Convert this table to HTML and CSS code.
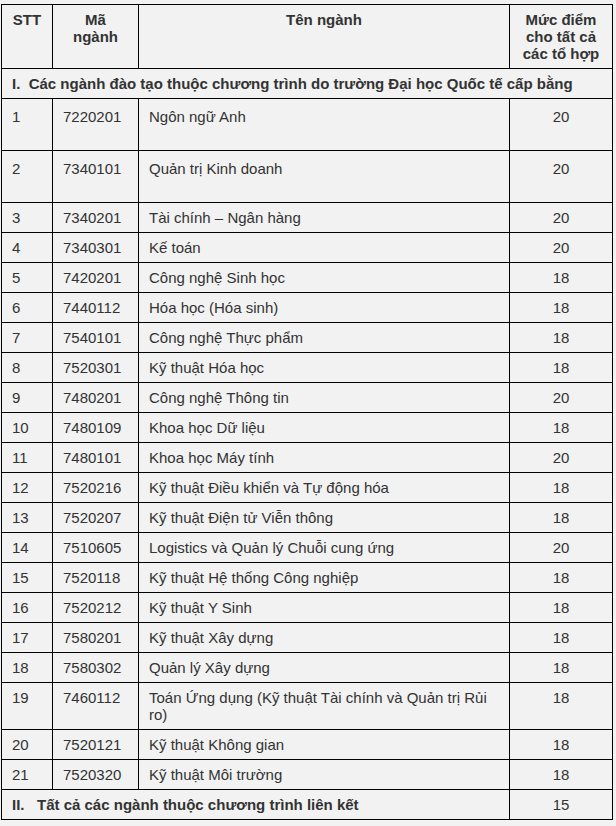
FILE: index.html
```html
<!DOCTYPE html>
<html lang="vi">
<head>
<meta charset="utf-8">
<title>Mức điểm</title>
<link rel="stylesheet" href="styles.css">
</head>
<body>
<table class="scores">
  <colgroup>
    <col class="c-stt">
    <col class="c-ma">
    <col class="c-ten">
    <col class="c-diem">
  </colgroup>
  <thead>
    <tr class="head">
      <th>STT</th>
      <th>Mã<br>ngành</th>
      <th>Tên ngành</th>
      <th>Mức điểm<br>cho tất cả<br>các tổ hợp</th>
    </tr>
  </thead>
  <tbody>
    <tr class="section"><td colspan="4">I.&nbsp; Các ngành đào tạo thuộc chương trình do trường Đại học Quốc tế cấp bằng</td></tr>
    <tr class="tall"><td>1</td><td>7220201</td><td>Ngôn ngữ Anh</td><td class="num">20</td></tr>
    <tr class="tall"><td>2</td><td>7340101</td><td>Quản trị Kinh doanh</td><td class="num">20</td></tr>
    <tr><td>3</td><td>7340201</td><td>Tài chính – Ngân hàng</td><td class="num">20</td></tr>
    <tr><td>4</td><td>7340301</td><td>Kế toán</td><td class="num">20</td></tr>
    <tr><td>5</td><td>7420201</td><td>Công nghệ Sinh học</td><td class="num">18</td></tr>
    <tr><td>6</td><td>7440112</td><td>Hóa học (Hóa sinh)</td><td class="num">18</td></tr>
    <tr><td>7</td><td>7540101</td><td>Công nghệ Thực phẩm</td><td class="num">18</td></tr>
    <tr><td>8</td><td>7520301</td><td>Kỹ thuật Hóa học</td><td class="num">18</td></tr>
    <tr><td>9</td><td>7480201</td><td>Công nghệ Thông tin</td><td class="num">20</td></tr>
    <tr><td>10</td><td>7480109</td><td>Khoa học Dữ liệu</td><td class="num">18</td></tr>
    <tr><td>11</td><td>7480101</td><td>Khoa học Máy tính</td><td class="num">20</td></tr>
    <tr><td>12</td><td>7520216</td><td>Kỹ thuật Điều khiển và Tự động hóa</td><td class="num">18</td></tr>
    <tr><td>13</td><td>7520207</td><td>Kỹ thuật Điện tử Viễn thông</td><td class="num">18</td></tr>
    <tr><td>14</td><td>7510605</td><td>Logistics và Quản lý Chuỗi cung ứng</td><td class="num">20</td></tr>
    <tr><td>15</td><td>7520118</td><td>Kỹ thuật Hệ thống Công nghiệp</td><td class="num">18</td></tr>
    <tr><td>16</td><td>7520212</td><td>Kỹ thuật Y Sinh</td><td class="num">18</td></tr>
    <tr><td>17</td><td>7580201</td><td>Kỹ thuật Xây dựng</td><td class="num">18</td></tr>
    <tr><td>18</td><td>7580302</td><td>Quản lý Xây dựng</td><td class="num">18</td></tr>
    <tr><td>19</td><td>7460112</td><td>Toán Ứng dụng (Kỹ thuật Tài chính và Quản trị Rủi ro)</td><td class="num">18</td></tr>
    <tr><td>20</td><td>7520121</td><td>Kỹ thuật Không gian</td><td class="num">18</td></tr>
    <tr><td>21</td><td>7520320</td><td>Kỹ thuật Môi trường</td><td class="num">18</td></tr>
    <tr class="section"><td colspan="3">II.&nbsp;&nbsp; Tất cả các ngành thuộc chương trình liên kết</td><td class="num plain">15</td></tr>
  </tbody>
</table>
</body>
</html>
```

FILE: styles.css
```css
html, body {
  margin: 0;
  background: #f1f2f1;
}

body {
  padding: 4px 0 0 1px;
  font-family: "Liberation Sans", Arial, sans-serif;
  font-size: 15px;
  line-height: 17px;
  color: #333333;
}

.scores {
  border-collapse: collapse;
  table-layout: fixed;
  width: 611px;
}

.c-stt { width: 51px; }
.c-ma { width: 86px; }
.c-ten { width: 371px; }
.c-diem { width: 103px; }

.scores th,
.scores td {
  border: 1px solid #000;
  padding: 6px 10px 6px 10px;
  vertical-align: top;
  text-align: left;
  font-weight: normal;
}

.scores th {
  text-align: center;
  font-weight: bold;
  padding: 6px 4px;
}

.head th {
  height: 51px;
}

.section td {
  font-weight: bold;
  padding-left: 10px;
}

.section td.plain {
  font-weight: normal;
}

.scores td.num {
  text-align: center;
}

.tall td {
  padding-top: 9px;
  padding-bottom: 25px;
}
```
